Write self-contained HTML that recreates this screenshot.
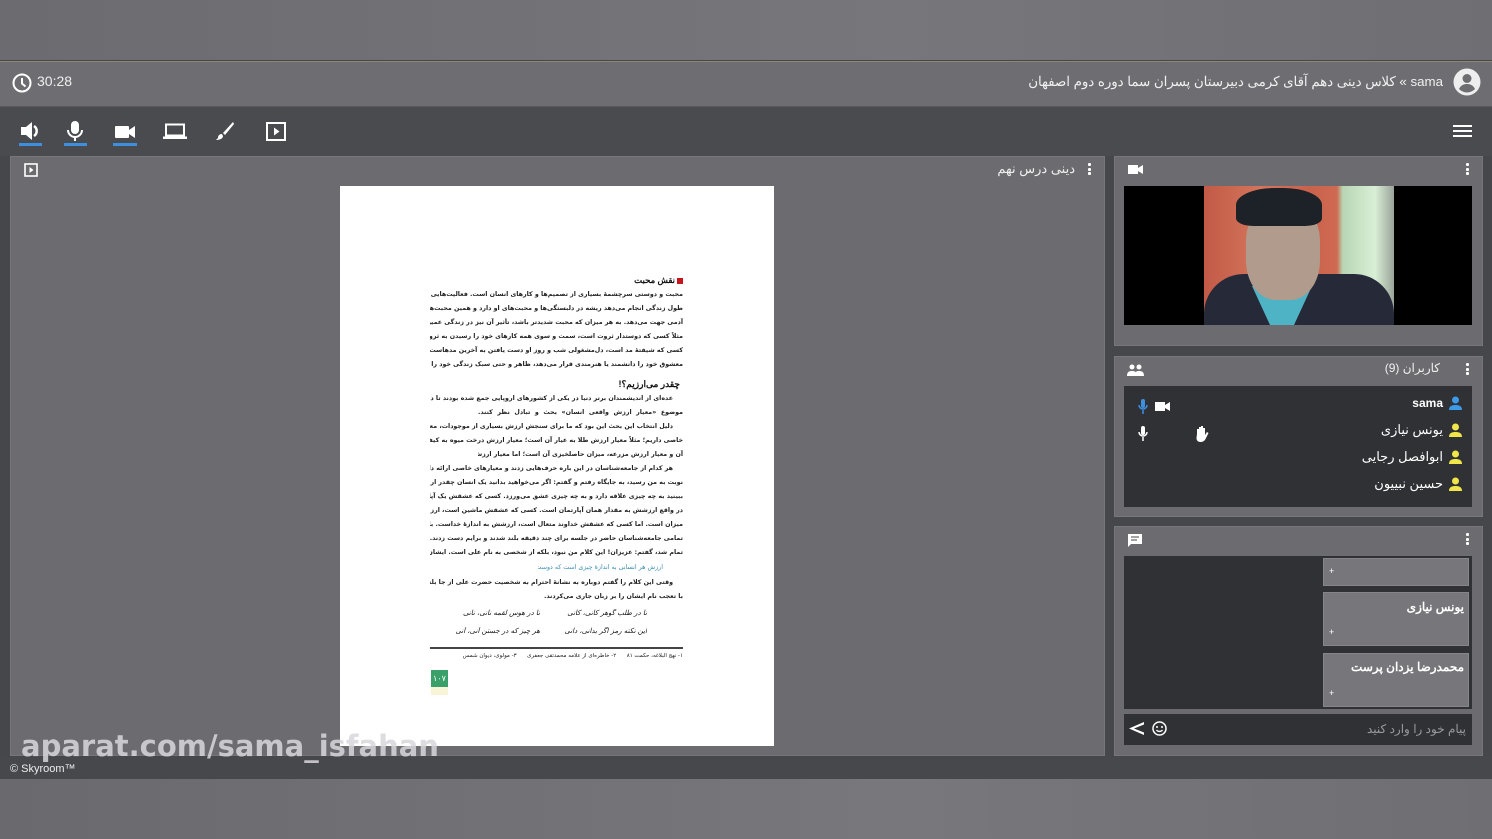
<!DOCTYPE html>
<html><head><meta charset="utf-8"><style>
*{margin:0;padding:0;box-sizing:border-box}
body{width:1492px;height:839px;overflow:hidden;background:#46474b;font-family:"Liberation Sans","Noto Sans CJK SC",sans-serif;position:relative;color:#fff}
.a{position:absolute}
.top{left:0;top:0;width:1492px;height:60px;background:linear-gradient(90deg,#6c6c70,#77777b 60%,#6f6f73)}
.hdr{left:0;top:61px;width:1492px;height:46px;background:#6e6e72;border-top:1px solid #8f8878;border-bottom:1px solid #5a5a5e}
.tb{left:0;top:107px;width:1492px;height:49px;background:#4a4b4f}
.panel{background:#6c6c70;border:1px solid #77777b}
.dark{background:#303135}
.fa{font-family:"Liberation Sans","Noto Sans CJK SC",sans-serif;direction:rtl}
.ln{position:absolute;left:430px;width:253px;font-size:6.3px;line-height:10px;color:#222;direction:rtl;text-align:justify;text-align-last:justify;white-space:nowrap;overflow:hidden;font-weight:bold;font-family:"DejaVu Sans",sans-serif}
.pm{position:absolute;width:95px;font-size:7px;color:#111;text-align:right;white-space:nowrap;overflow:hidden;direction:rtl;font-family:'DejaVu Serif',serif;font-style:italic}
.ul{position:absolute;height:3px;background:#3d8fe0;top:143px}
.dots{position:absolute;width:3px}
.dots i{display:block;width:3px;height:3px;background:#fff;margin-bottom:1.5px;border-radius:1px}
.msg{position:absolute;left:1323px;width:146px;background:#77777b;border:1px solid #86868a}
</style></head><body>
<div class="a top"></div>
<div class="a hdr"></div>
<svg class="a" style="left:11px;top:72px" width="22" height="22" viewBox="0 0 22 22"><circle cx="11" cy="11" r="8.5" fill="none" stroke="#fff" stroke-width="2"/><path d="M11 6v5.5l3.5 3" fill="none" stroke="#fff" stroke-width="2"/></svg>
<div class="a" style="left:37px;top:73px;font-size:14px;color:#eee">30:28</div>
<div class="a fa" style="right:49px;top:74px;font-size:13.3px;color:#f0f0f0;white-space:nowrap">sama » کلاس دینی دهم آقای کرمی دبیرستان پسران سما دوره دوم اصفهان</div>
<svg class="a" style="left:1453px;top:68px" width="28" height="28" viewBox="0 0 28 28"><circle cx="14" cy="14" r="13.5" fill="#eee"/><circle cx="14" cy="10.5" r="4.5" fill="#6e6e72"/><path d="M6 21c2-4 5-5 8-5s6 1 8 5c-2 2-5 3.5-8 3.5S8 23 6 21z" fill="#6e6e72"/></svg>
<div class="a tb"></div>
<svg class="a" style="left:20px;top:121px" width="22" height="20" viewBox="0 0 22 20"><path d="M1 6h5l6-5v18l-6-5H1z" fill="#fff"/><path d="M14 5a6 6 0 0 1 0 10" fill="none" stroke="#fff" stroke-width="2.5"/></svg>
<div class="ul" style="left:19px;width:23px"></div>
<svg class="a" style="left:66px;top:120px" width="18" height="22" viewBox="0 0 18 22"><rect x="5" y="1" width="8" height="13" rx="4" fill="#fff"/><path d="M2 10a7 7 0 0 0 14 0" fill="none" stroke="#fff" stroke-width="2"/><path d="M9 17v4" stroke="#fff" stroke-width="2"/></svg>
<div class="ul" style="left:64px;width:23px"></div>
<svg class="a" style="left:114px;top:124px" width="22" height="16" viewBox="0 0 22 16"><rect x="1" y="2" width="14" height="12" rx="1" fill="#fff"/><path d="M15 6l6-4v12l-6-4z" fill="#fff"/></svg>
<div class="ul" style="left:113px;width:24px"></div>
<svg class="a" style="left:163px;top:123px" width="24" height="17" viewBox="0 0 24 17"><rect x="3" y="1.5" width="18" height="11" fill="none" stroke="#fff" stroke-width="2"/><rect x="0" y="13.5" width="24" height="2.5" fill="#fff"/></svg>
<svg class="a" style="left:215px;top:121px" width="20" height="20" viewBox="0 0 20 20"><path d="M18 1L8 12l2 2L19 3z" fill="#fff"/><path d="M7 13c-3 0-4 2-4 4l-2 2c3 0 7-1 7-4z" fill="#fff"/></svg>
<svg class="a" style="left:266px;top:122px" width="20" height="19" viewBox="0 0 20 19"><rect x="1" y="1" width="18" height="17" fill="none" stroke="#fff" stroke-width="2"/><path d="M8 5.5v8l5.5-4z" fill="#fff"/></svg>
<div class="a" style="left:1453px;top:125px;width:19px"><div style="height:2px;background:#fff;margin-bottom:3px"></div><div style="height:2px;background:#fff;margin-bottom:3px"></div><div style="height:2px;background:#fff"></div></div>
<div class="a panel" style="left:10px;top:156px;width:1095px;height:600px"></div>
<svg class="a" style="left:24px;top:163px" width="14" height="14" viewBox="0 0 14 14"><rect x="1" y="1" width="12" height="12" fill="none" stroke="#fff" stroke-width="1.6"/><path d="M5.5 4v6l4-3z" fill="#fff"/></svg>
<div class="a fa" style="right:417px;top:161px;font-size:13px;color:#f0f0f0">دینی درس نهم</div>
<div class="dots" style="left:1088px;top:163px"><i></i><i></i><i></i></div>
<div class="a" style="left:340px;top:186px;width:434px;height:560px;background:#fff"></div>
<div class="a" style="left:677px;top:278px;width:6px;height:6px;background:#c4161c"></div>
<div class="a fa" style="left:560px;width:115px;top:275px;font-size:8.5px;color:#111;font-weight:bold;text-align:right">نقش محبت</div>
<div class="ln" style="top:290px">محبت و دوستی سرچشمهٔ بسیاری از تصمیم‌ها و کارهای انسان است. فعالیت‌هایی که آدمی در</div>
<div class="ln" style="top:304px">طول زندگی انجام می‌دهد ریشه در دلبستگی‌ها و محبت‌های او دارد و همین محبت‌هاست که به زندگی</div>
<div class="ln" style="top:318px">آدمی جهت می‌دهد. به هر میزان که محبت شدیدتر باشد، تأثیر آن نیز در زندگی عمیق‌تر است؛</div>
<div class="ln" style="top:332px">مثلاً کسی که دوستدار ثروت است، سمت و سوی همه کارهای خود را رسیدن به ثروت قرار می‌دهد.</div>
<div class="ln" style="top:346px">کسی که شیفتهٔ مد است، دل‌مشغولی شب و روز او دست یافتن به آخرین مدهاست و کسی که محبوب</div>
<div class="ln" style="top:360px">معشوق خود را دانشمند یا هنرمندی قرار می‌دهد، ظاهر و حتی سبک زندگی خود را شبیه وی می‌سازد.</div>
<div class="a fa" style="left:560px;width:120px;top:379px;font-size:9px;color:#111;font-weight:bold;text-align:right">چقدر می‌ارزیم؟!</div>
<div class="ln" style="top:394px;width:243px">عده‌ای از اندیشمندان برتر دنیا در یکی از کشورهای اروپایی جمع شده بودند تا دربارهٔ</div>
<div class="ln" style="top:408px;width:205px;left:478px">موضوع «معیار ارزش واقعی انسان» بحث و تبادل نظر کنند.</div>
<div class="ln" style="top:422px;width:243px">دلیل انتخاب این بحث این بود که ما برای سنجش ارزش بسیاری از موجودات، معیار</div>
<div class="ln" style="top:436px">خاصی داریم؛ مثلاً معیار ارزش طلا به عیار آن است؛ معیار ارزش درخت میوه به کیفیت محصول</div>
<div class="ln" style="top:450px;width:205px;left:478px">آن و معیار ارزش مزرعه، میزان حاصلخیزی آن است؛ اما معیار ارزش انسان چیست؟!</div>
<div class="ln" style="top:464px;width:243px">هر کدام از جامعه‌شناسان در این باره حرف‌هایی زدند و معیارهای خاصی ارائه دادند. وقتی</div>
<div class="ln" style="top:478px">نوبت به من رسید، به جایگاه رفتم و گفتم: اگر می‌خواهید بدانید یک انسان چقدر ارزش دارد،</div>
<div class="ln" style="top:492px">ببینید به چه چیزی علاقه دارد و به چه چیزی عشق می‌ورزد. کسی که عشقش یک آپارتمان است،</div>
<div class="ln" style="top:506px">در واقع ارزشش به مقدار همان آپارتمان است. کسی که عشقش ماشین است، ارزشش به همان</div>
<div class="ln" style="top:520px">میزان است. اما کسی که عشقش خداوند متعال است، ارزشش به اندازهٔ خداست. با تمام شدن حرفم</div>
<div class="ln" style="top:534px">تمامی جامعه‌شناسان حاضر در جلسه برای چند دقیقه بلند شدند و برایم دست زدند. وقتی تشویق</div>
<div class="ln" style="top:548px">تمام شد، گفتم: عزیزان! این کلام من نبود، بلکه از شخصی به نام علی است. ایشان می‌فرماید:</div>
<div class="ln" style="top:563px;width:125px;left:538px;color:#3a8fb0;font-weight:normal">ارزش هر انسانی به اندازهٔ چیزی است که دوست می‌دارد.</div>
<div class="ln" style="top:578px;width:243px">وقتی این کلام را گفتم دوباره به نشانهٔ احترام به شخصیت حضرت علی از جا بلند شدند و</div>
<div class="ln" style="top:592px;width:205px;left:478px;text-align-last:right">با تعجب نام ایشان را بر زبان جاری می‌کردند.</div>
<div class="pm" style="left:552px;top:609px">تا در طلب گوهر کانی، کانی</div>
<div class="pm" style="left:445px;top:609px">تا در هوس لقمه نانی، نانی</div>
<div class="pm" style="left:552px;top:627px">این نکته رمز اگر بدانی، دانی</div>
<div class="pm" style="left:445px;top:627px">هر چیز که در جستن آنی، آنی</div>
<div class="a" style="left:430px;top:647px;width:253px;height:1.5px;background:#444"></div>
<div class="ln" style="top:651px;font-size:5.5px;font-weight:normal;text-align-last:right">۱- نهج البلاغه، حکمت ۸۱ &nbsp;&nbsp;&nbsp;&nbsp; ۲- خاطره‌ای از علامه محمدتقی جعفری &nbsp;&nbsp;&nbsp;&nbsp; ۳- مولوی، دیوان شمس</div>
<div class="a" style="left:431px;top:670px;width:17px;height:17px;background:#3aa06a;color:#fff;font-size:8px;text-align:center;line-height:17px">۱۰۷</div>
<div class="a" style="left:431px;top:687px;width:17px;height:8px;background:#f7f4d8"></div>
<div class="a panel" style="left:1114px;top:156px;width:369px;height:190px"></div>
<svg class="a" style="left:1128px;top:164px" width="15" height="11" viewBox="0 0 15 11"><rect x="0" y="1" width="10" height="9" fill="#fff"/><path d="M10 4l5-3v9l-5-3z" fill="#fff"/></svg>
<div class="dots" style="left:1466px;top:163px"><i></i><i></i><i></i></div>
<div class="a" style="left:1124px;top:186px;width:348px;height:139px;background:#000;overflow:hidden">
 <div class="a" style="left:80px;top:0;width:190px;height:139px;background:linear-gradient(90deg,#c25a46,#d4755d 30%,#c9624c 55%,#cf6a52 70%,#b7d6b4 73%,#d9efd6 90%,#9aa39a)"></div>
 <div class="a" style="left:80px;top:88px;width:190px;height:51px;background:#252938;border-radius:40px 40px 0 0"></div>
 <div class="a" style="left:128px;top:100px;width:60px;height:39px;background:#4fb3c6;clip-path:polygon(0 0,100% 0,70% 100%,30% 100%)"></div>
 <div class="a" style="left:122px;top:16px;width:74px;height:98px;background:#b09b8c;border-radius:40%"></div>
 <div class="a" style="left:112px;top:2px;width:86px;height:38px;background:#1d2128;border-radius:45% 45% 20% 20%"></div>
</div>
<div class="a panel" style="left:1114px;top:356px;width:369px;height:161px"></div>
<svg class="a" style="left:1127px;top:364px" width="17" height="12" viewBox="0 0 17 12"><circle cx="5" cy="3" r="2.5" fill="#fff"/><circle cx="12" cy="3" r="2.5" fill="#fff"/><path d="M0 12c0-4 2-5 5-5s5 1 5 5zM8 12c0-4 1-5 4-5s5 1 5 5z" fill="#fff"/></svg>
<div class="a fa" style="right:52px;top:361px;font-size:12px;color:#f0f0f0">کاربران (9)</div>
<div class="dots" style="left:1466px;top:363px"><i></i><i></i><i></i></div>
<div class="a dark" style="left:1124px;top:386px;width:348px;height:121px"></div>
<svg class="a" style="left:1138px;top:399px" width="10" height="15" viewBox="0 0 10 15"><rect x="3" y="0" width="4" height="9" rx="2" fill="#3d8fe0"/><path d="M1 6a4 4 0 0 0 8 0M5 11v4" fill="none" stroke="#3d8fe0" stroke-width="1.5"/></svg>
<svg class="a" style="left:1155px;top:401px" width="15" height="11" viewBox="0 0 15 11"><rect x="0" y="1" width="10" height="9" fill="#fff"/><path d="M10 4l5-3v9l-5-3z" fill="#fff"/></svg>
<svg class="a" style="left:1138px;top:426px" width="10" height="15" viewBox="0 0 10 15"><rect x="3" y="0" width="4" height="9" rx="2" fill="#fff"/><path d="M1 6a4 4 0 0 0 8 0M5 11v4" fill="none" stroke="#fff" stroke-width="1.5"/></svg>
<svg class="a" style="left:1194px;top:425px" width="15" height="17" viewBox="0 0 15 17"><path d="M3 9V4h2v5V2h2v7V1h2v8V3h2v7l2-3 1.5 1-3 6c-1 2-3 3-5 3-3 0-4-2-4-4z" fill="#fff"/></svg>
<svg class="a" style="left:1448px;top:396px" width="15" height="14" viewBox="0 0 15 14"><circle cx="7.5" cy="4" r="3.5" fill="#3d9ae8"/><path d="M1 14c0-4 3-5 6.5-5s6.5 1 6.5 5z" fill="#3d9ae8"/></svg>
<div class="a fa" style="right:49px;top:396px;font-size:12px;font-weight:bold">sama</div>
<svg class="a" style="left:1448px;top:423px" width="15" height="14" viewBox="0 0 15 14"><circle cx="7.5" cy="4" r="3.5" fill="#f0e64a"/><path d="M1 14c0-4 3-5 6.5-5s6.5 1 6.5 5z" fill="#f0e64a"/></svg>
<div class="a fa" style="right:49px;top:422px;font-size:13px">یونس نیازی</div>
<svg class="a" style="left:1448px;top:450px" width="15" height="14" viewBox="0 0 15 14"><circle cx="7.5" cy="4" r="3.5" fill="#f0e64a"/><path d="M1 14c0-4 3-5 6.5-5s6.5 1 6.5 5z" fill="#f0e64a"/></svg>
<div class="a fa" style="right:49px;top:449px;font-size:13px">ابوافصل رجایی</div>
<svg class="a" style="left:1448px;top:477px" width="15" height="14" viewBox="0 0 15 14"><circle cx="7.5" cy="4" r="3.5" fill="#f0e64a"/><path d="M1 14c0-4 3-5 6.5-5s6.5 1 6.5 5z" fill="#f0e64a"/></svg>
<div class="a fa" style="right:49px;top:476px;font-size:13px">حسین نبییون</div>
<div class="a panel" style="left:1114px;top:526px;width:369px;height:230px"></div>
<svg class="a" style="left:1128px;top:534px" width="14" height="14" viewBox="0 0 14 14"><path d="M0 0h14v10H3l-3 3z" fill="#fff"/><path d="M3 3h8M3 6h6" stroke="#6c6c70" stroke-width="1.2"/></svg>
<div class="dots" style="left:1466px;top:533px"><i></i><i></i><i></i></div>
<div class="a dark" style="left:1124px;top:556px;width:348px;height:153px"></div>
<div class="msg" style="top:558px;height:28px"><span class="a" style="left:5px;top:7px;font-size:9px">+</span></div>
<div class="msg" style="top:592px;height:54px"><span class="a fa" style="right:4px;top:7px;font-size:12px;font-weight:bold">یونس نیازی</span><span class="a" style="left:5px;top:34px;font-size:9px">+</span></div>
<div class="msg" style="top:653px;height:54px"><span class="a fa" style="right:4px;top:6px;font-size:12px;font-weight:bold;white-space:nowrap">محمدرضا یزدان پرست</span><span class="a" style="left:5px;top:34px;font-size:9px">+</span></div>
<div class="a dark" style="left:1124px;top:714px;width:348px;height:31px"></div>
<svg class="a" style="left:1128px;top:721px" width="16" height="15" viewBox="0 0 16 15"><path d="M16 1L1 7.5 16 14v-2.5L6 7.5l10-4z" fill="#fff"/></svg>
<svg class="a" style="left:1152px;top:721px" width="15" height="15" viewBox="0 0 15 15"><circle cx="7.5" cy="7.5" r="6.5" fill="none" stroke="#fff" stroke-width="1.5"/><circle cx="5" cy="6" r="1" fill="#fff"/><circle cx="10" cy="6" r="1" fill="#fff"/><path d="M4.5 9a3.5 3 0 0 0 6 0" fill="none" stroke="#fff" stroke-width="1.3"/></svg>
<div class="a fa" style="right:26px;top:722px;font-size:12px;color:#9a9a9e">پیام خود را وارد کنید</div>
<div class="a" style="left:0;top:757px;width:1492px;height:22px;background:#47484c"></div>
<div class="a" style="left:10px;top:763px;font-size:11px;color:#eee">© Skyroom™</div>
<div class="a" style="left:0;top:779px;width:1492px;height:60px;background:linear-gradient(90deg,#6a6a6e,#78787c 60%,#6f6f73)"></div>
<div class="a" style="left:21px;top:729px;font-size:29px;font-weight:bold;color:rgba(215,215,220,0.85);letter-spacing:0;font-family:'DejaVu Sans',sans-serif">aparat.com/sama_isfahan</div>
</body></html>
